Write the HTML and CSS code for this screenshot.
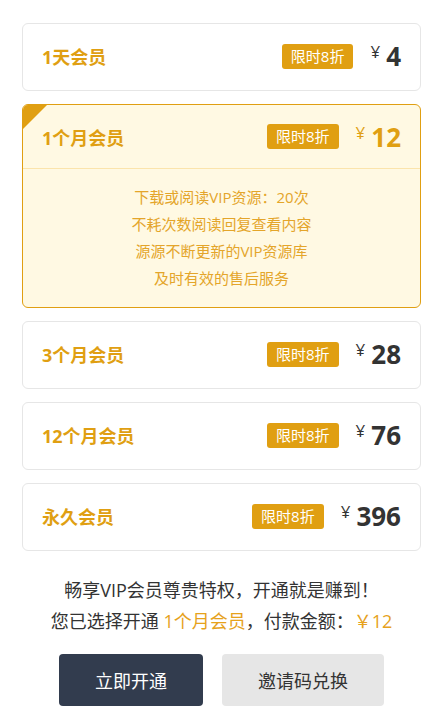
FILE: index.html
```html
<!DOCTYPE html>
<html lang="zh">
<head>
<meta charset="utf-8">
<title>开通会员</title>
<link rel="stylesheet" href="styles.css">
</head>
<body>
<div class="page">
  <div class="plans">
    <div class="plan">
      <div class="plan-head">
        <span class="plan-name">1天会员</span>
        <span class="badge">限时8折</span>
        <span class="price"><span class="yen">¥</span><span class="num">4</span></span>
      </div>
    </div>
    <div class="plan selected">
      <span class="corner"></span>
      <div class="plan-head">
        <span class="plan-name">1个月会员</span>
        <span class="badge">限时8折</span>
        <span class="price"><span class="yen">¥</span><span class="num">12</span></span>
      </div>
      <ul class="features">
        <li>下载或阅读VIP资源：20次</li>
        <li>不耗次数阅读回复查看内容</li>
        <li>源源不断更新的VIP资源库</li>
        <li>及时有效的售后服务</li>
      </ul>
    </div>
    <div class="plan">
      <div class="plan-head">
        <span class="plan-name">3个月会员</span>
        <span class="badge">限时8折</span>
        <span class="price"><span class="yen">¥</span><span class="num">28</span></span>
      </div>
    </div>
    <div class="plan">
      <div class="plan-head">
        <span class="plan-name">12个月会员</span>
        <span class="badge">限时8折</span>
        <span class="price"><span class="yen">¥</span><span class="num">76</span></span>
      </div>
    </div>
    <div class="plan">
      <div class="plan-head">
        <span class="plan-name">永久会员</span>
        <span class="badge">限时8折</span>
        <span class="price"><span class="yen">¥</span><span class="num">396</span></span>
      </div>
    </div>
  </div>
  <div class="summary">
    <p>畅享VIP会员尊贵特权，开通就是赚到！</p>
    <p>您已选择开通 <span class="hl">1个月会员</span>，付款金额：<span class="hl">￥12</span></p>
  </div>
  <div class="actions">
    <button class="btn btn-dark">立即开通</button>
    <button class="btn btn-light">邀请码兑换</button>
  </div>
</div>
</body>
</html>
```
FILE: styles.css
```css
* { box-sizing: border-box; }
html, body { margin: 0; padding: 0; background: #fff; }
body {
  font-family: "Open Sans", "Noto Sans CJK SC", sans-serif;
  color: #333;
}
.page {
  width: 399px;
  margin-left: 22px;
  padding-top: 23px;
}
.plans {
  display: flex;
  flex-direction: column;
  gap: 13px;
}
.plan {
  position: relative;
  border: 1px solid #e6e6e6;
  border-radius: 6px;
  background: #fff;
  overflow: hidden;
}
.plan-head {
  height: 66px;
  display: flex;
  align-items: center;
  padding: 0 19px 2px 19px;
}
.plan-name {
  flex: 1;
  font-size: 18px;
  font-weight: 700;
  color: #e09f12;
}
.badge {
  height: 25px;
  line-height: 25px;
  padding: 0 9px;
  border-radius: 3px;
  background: #e09f12;
  color: #fff;
  font-size: 15px;
}
.price {
  display: flex;
  align-items: flex-start;
  margin-left: 17px;
  color: #333;
  font-weight: 700;
}
.yen {
  font-size: 17px;
  font-weight: 400;
  line-height: 17px;
  margin-top: 1px;
  margin-right: 6px;
}
.num {
  font-size: 26px;
  line-height: 28px;
}
.selected {
  border-color: #e09f12;
  background: #fff9e3;
}
.selected .plan-head {
  height: 63px;
  border-bottom: 1px solid #fbe4ab;
  box-sizing: content-box;
  padding-bottom: 0;
}
.selected .price { color: #e09f12; }
.corner {
  position: absolute;
  left: 0;
  top: 0;
  width: 0;
  height: 0;
  border-top: 24px solid #e09f12;
  border-right: 24px solid transparent;
}
.features {
  list-style: none;
  margin: 0;
  padding: 15px 0;
  text-align: center;
  font-size: 15px;
  line-height: 27px;
  color: #e4a52a;
}
.summary {
  margin-top: 24px;
  text-align: center;
  font-size: 18px;
  line-height: 31px;
}
.summary p { margin: 0; }
.hl { color: #e6a21c; }
.actions {
  display: flex;
  justify-content: center;
  gap: 19px;
  margin-top: 17px;
}
.btn {
  height: 52px;
  border: none;
  border-radius: 4px;
  font-family: inherit;
  font-size: 18px;
}
.btn-dark {
  width: 144px;
  background: #323c4e;
  color: #fff;
}
.btn-light {
  width: 162px;
  background: #e6e6e6;
  color: #333;
}
```
